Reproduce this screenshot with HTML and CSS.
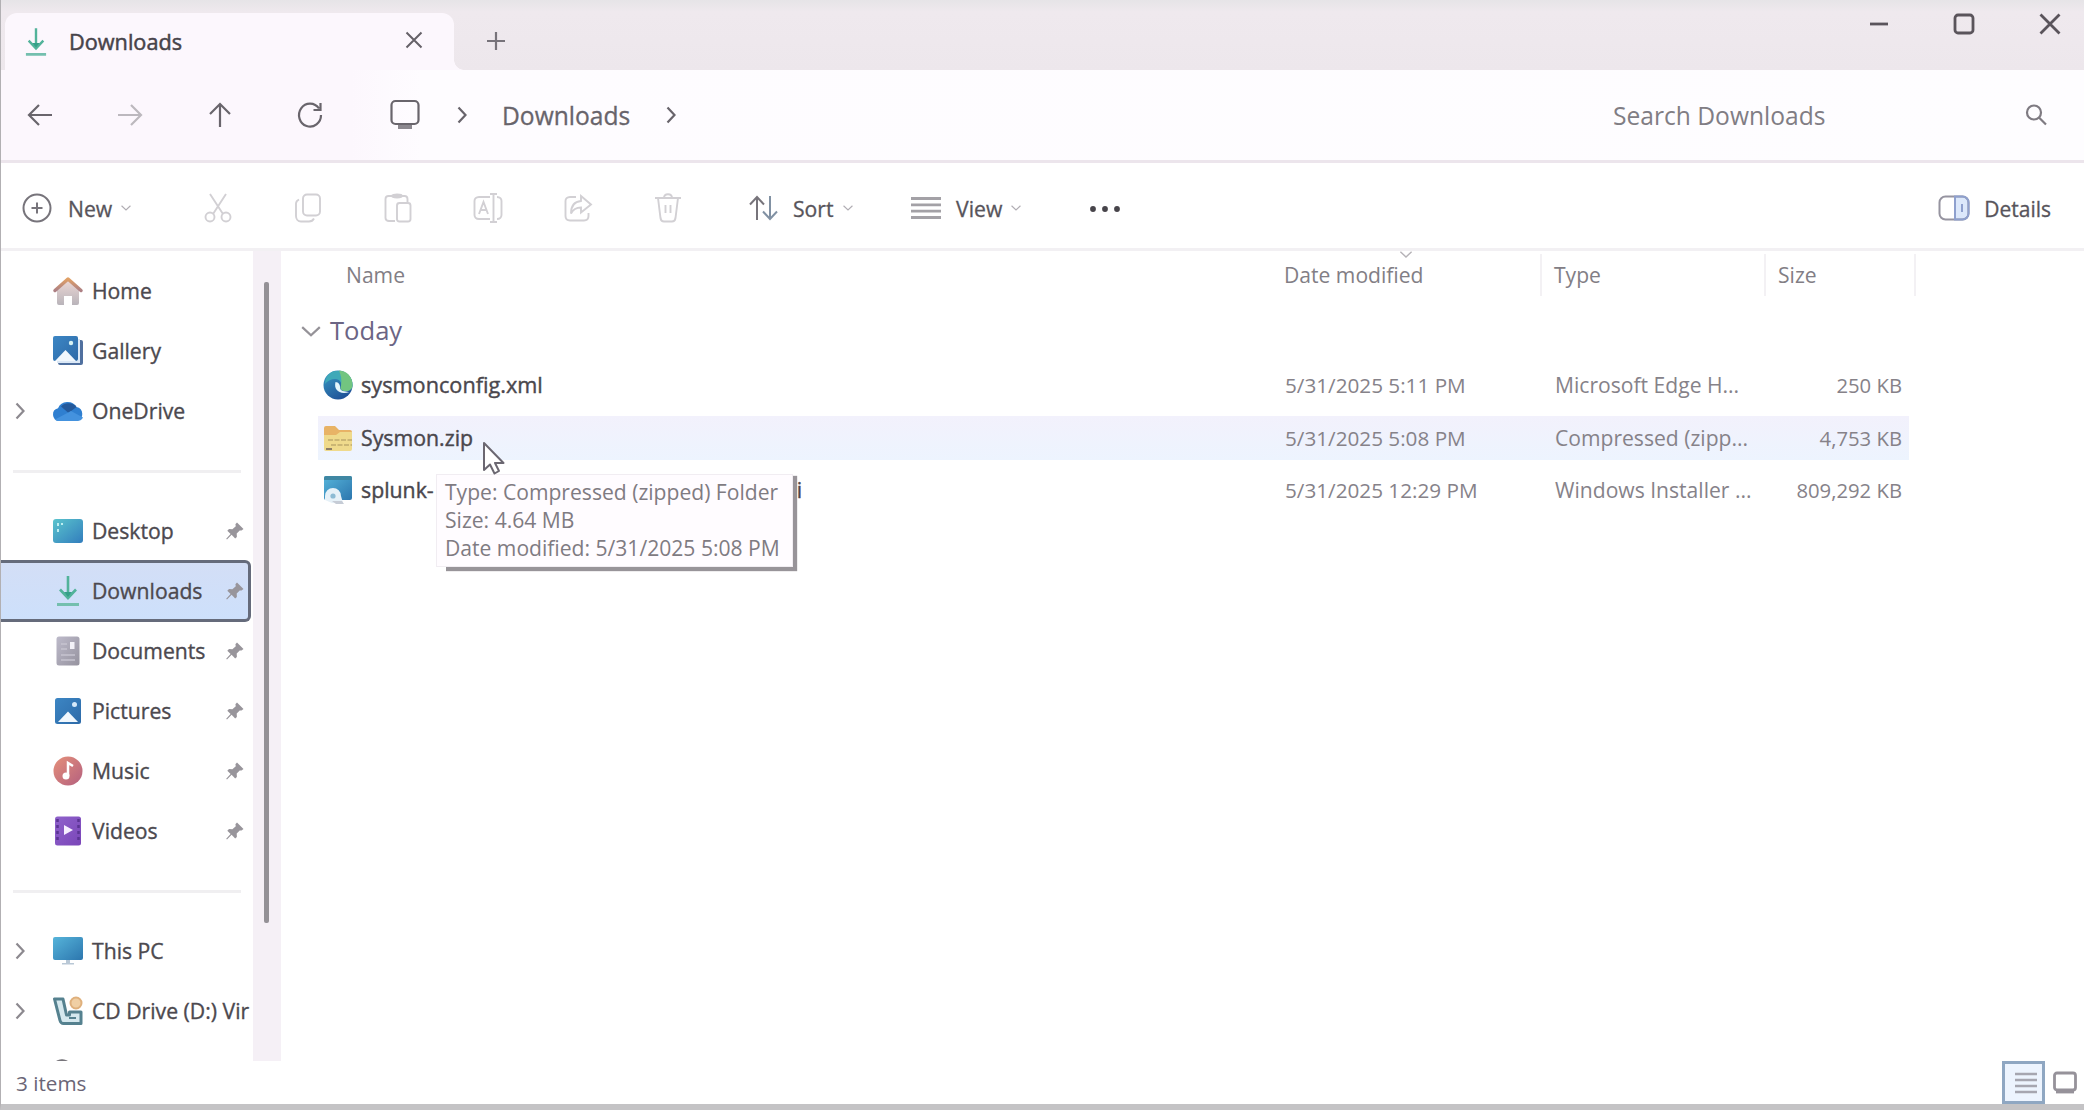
FILE: index.html
```html
<!DOCTYPE html>
<html lang="en">
<head>
<meta charset="utf-8">
<title>Downloads</title>
<link rel="stylesheet" href="styles.css">
</head>
<body>
<svg class="defs" width="0" height="0">
  <defs>
    <linearGradient id="blue" x1="0" y1="0" x2="1" y2="1"><stop offset="0" stop-color="#3c86c4"/><stop offset="1" stop-color="#2d6aa8"/></linearGradient>
    <linearGradient id="screen" x1="0" y1="0" x2="1" y2="1"><stop offset="0" stop-color="#56b4da"/><stop offset="1" stop-color="#2c76ae"/></linearGradient>
    <linearGradient id="desk" x1="0" y1="0" x2="1" y2="1"><stop offset="0" stop-color="#5ac4cd"/><stop offset="1" stop-color="#327dbd"/></linearGradient>
    <linearGradient id="note" x1="0" y1="0" x2="1" y2="1"><stop offset="0" stop-color="#e5907a"/><stop offset="1" stop-color="#b4607f"/></linearGradient>
    <linearGradient id="film" x1="0" y1="0" x2="1" y2="1"><stop offset="0" stop-color="#8f62cb"/><stop offset="1" stop-color="#7a45b8"/></linearGradient>
    <linearGradient id="roof" x1="0" y1="0" x2="0" y2="1"><stop offset="0" stop-color="#e0a066"/><stop offset="1" stop-color="#ad8084"/></linearGradient>
    <linearGradient id="wall" x1="0" y1="0" x2="0" y2="1"><stop offset="0" stop-color="#efd9d6"/><stop offset="1" stop-color="#b9b4ba"/></linearGradient>
    <linearGradient id="paper" x1="0" y1="0" x2="1" y2="1"><stop offset="0" stop-color="#bdbaca"/><stop offset="1" stop-color="#96939f"/></linearGradient>
    <linearGradient id="edge" x1="0" y1="0" x2=".6" y2="1"><stop offset="0" stop-color="#3a9cc4"/><stop offset="1" stop-color="#1f5298"/></linearGradient>
    <symbol id="pin" viewBox="0 0 20 20"><path d="M12 1.5 18.5 8l-2 1.6-1.8-.2-3 3.2.2 3.4-1.7 1.5-3.600-3.700L2 18.600l-.8-.8L5.600 13 2.300 9.700 4 8l3.400.2 3.400-3-.4-1.900z" fill="#98959b"/></symbol>
    <symbol id="right" viewBox="0 0 10 18"><path d="M1.500 1.500 8.500 9l-7 7.500" fill="none" stroke="currentColor" stroke-width="2.200"/></symbol>
    <symbol id="down" viewBox="0 0 18 10"><path d="M1 1l8 7.500L17 1" fill="none" stroke="currentColor" stroke-width="2"/></symbol>
    <symbol id="download" viewBox="0 0 24 32"><path d="M12 1v21M4 14.500l8 8.500 8-8.500" fill="none" stroke="#52b39a" stroke-width="2.600"/><path d="M8 17h8l-4 5z" fill="#35a088"/><path d="M1 29.500h22" stroke="#74bfae" stroke-width="3"/></symbol>
    <symbol id="picture" viewBox="0 0 28 28"><rect x="1" y="1" width="26" height="26" rx="2.500" fill="url(#blue)"/><path d="M4 25 14 14.500 24 25z" fill="#f0f7fd"/><circle cx="20.500" cy="7.500" r="2.500" fill="#d6eafa"/></symbol>
  </defs>
</svg>

<div class="window">
  <header class="titlebar">
    <div class="tab">
      <svg class="tab-icon" width="22" height="32"><use href="#download"/></svg>
      <span class="tab-title">Downloads</span>
      <svg class="tab-close" width="18" height="18" viewBox="0 0 18 18"><path d="M1.500 1.500l15 15m0-15l-15 15"/></svg>
    </div>
    <svg class="tab-add" width="20" height="20" viewBox="0 0 20 20"><path d="M10 1v18M1 10h18"/></svg>
    <div class="captions">
      <svg width="20" height="20" viewBox="0 0 20 20"><path d="M1 10h18"/></svg>
      <svg width="22" height="22" viewBox="0 0 22 22"><rect x="2" y="2" width="18" height="18" rx="3"/></svg>
      <svg width="22" height="22" viewBox="0 0 22 22"><path d="M1.500 1.500l19 19m0-19l-19 19"/></svg>
    </div>
  </header>

  <nav class="navbar">
    <div class="nav-buttons">
      <svg width="26" height="24" viewBox="0 0 26 24"><path d="M25 12H2M12 2 2 12l10 10"/></svg>
      <svg class="off" width="26" height="24" viewBox="0 0 26 24"><path d="M1 12h23M14 2l10 10-10 10"/></svg>
      <svg width="26" height="26" viewBox="0 0 26 26"><path d="M13 25V2M3 12 13 2l10 10"/></svg>
      <svg width="26" height="28" viewBox="0 0 26 28"><path d="M22 7.500A11 11.500 0 1 0 24 14M23.500 2v7h-7"/></svg>
    </div>
    <div class="address">
      <svg width="30" height="32" viewBox="0 0 30 32"><rect x="1.500" y="2" width="27" height="23" rx="4"/><path class="stand" d="M8 26h14v4H8z"/></svg>
      <svg class="crumb-sep" width="10" height="18"><use href="#right"/></svg>
      <span class="crumb">Downloads</span>
      <svg width="10" height="18"><use href="#right"/></svg>
    </div>
    <div class="search">
      <span>Search Downloads</span>
      <svg width="22" height="22" viewBox="0 0 22 22"><circle cx="9" cy="8.500" r="7"/><path d="M14 13.500l7 7"/></svg>
    </div>
  </nav>

  <div class="toolbar">
    <div class="cmd new">
      <svg width="30" height="30" viewBox="0 0 30 30"><circle cx="15" cy="15" r="13.500"/><path d="M15 9.500v11M9.500 15h11"/></svg>
      <span>New</span><svg class="caret" width="10" height="6"><use href="#down"/></svg>
    </div>
    <div class="edit">
      <svg width="28" height="30" viewBox="0 0 28 30"><path d="M6 1l13 20M22 1 9 21"/><circle cx="6" cy="24" r="4.500"/><circle cx="22" cy="24" r="4.500"/></svg>
      <svg width="28" height="30" viewBox="0 0 28 30"><rect x="9" y="1.500" width="17" height="21" rx="4"/><path d="M5 6.500c-2 1-3 2-3 4V23c0 3 2 5.500 5 5.500h8c2 0 4-1 5-3"/></svg>
      <svg width="28" height="30" viewBox="0 0 28 30"><path d="M11 28H5c-2 0-3.500-1-3.500-3V6c0-2 1-3 3-3h16c2 0 3 1 3 3v3M8 3c0-2 10-2 10 0s-10 2-10 0"/><rect x="13" y="10" width="13.500" height="18.500" rx="2.500"/></svg>
      <svg width="30" height="30" viewBox="0 0 30 30"><path d="M17 4H6C3 4 1.500 6 1.500 8v14c0 2 1.500 4 4.500 4h11M24 4c3 0 4.500 2 4.500 4v14c0 2-1.500 4-4.500 4M20.500 1v28M17 1h7M17 29h7M6 21l4.500-12L15 21M7.500 17h6"/></svg>
      <svg width="28" height="28" viewBox="0 0 28 28"><path d="M12 3H6C3 3 1.500 5 1.500 7v15c0 3 2 4.500 4.500 4.500h14c3 0 4.500-2 4.500-4.500v-3M17 2l10 8.500-10 8v-5c-5 0-8 2-10 6 0-8 4-12 10-12.500z"/></svg>
      <svg width="28" height="30" viewBox="0 0 28 30"><path d="M1 5h26M4 5l2.500 20c.3 2 1.500 3.500 3.500 3.500h8c2 0 3.200-1.500 3.500-3.500L24 5M10 5c0-5 8-5 8 0M11.500 12v8M16.500 12v8"/></svg>
    </div>
    <div class="cmd sort">
      <svg width="30" height="26" viewBox="0 0 30 26"><path d="M8 25V2M1 9.500 8 2l7 7.500"/><path class="steel" d="M21 1v23M14 16.500l7 7.500 7-7.500"/></svg>
      <span>Sort</span><svg class="caret" width="10" height="6"><use href="#down"/></svg>
    </div>
    <div class="cmd view">
      <svg width="30" height="22" viewBox="0 0 30 22"><path d="M0 1.500h30M0 7.800h30M0 14.200h30M0 20.500h30"/></svg>
      <span>View</span><svg class="caret" width="10" height="6"><use href="#down"/></svg>
    </div>
    <svg class="more" width="32" height="8" viewBox="0 0 32 8"><circle cx="4" cy="4" r="2.900"/><circle cx="16" cy="4" r="2.900"/><circle cx="28" cy="4" r="2.900"/></svg>
    <div class="cmd details">
      <svg width="32" height="26" viewBox="0 0 32 26"><path class="pane" d="M17 1.500h7.500a6 6 0 0 1 6 6v11a6 6 0 0 1-6 6H17z"/><rect x="1.500" y="1.500" width="29" height="23" rx="6"/><path class="pane-line" d="M17 1.500h7.500a6 6 0 0 1 6 6v11a6 6 0 0 1-6 6H17zM24 9v8"/></svg>
      <span>Details</span>
    </div>
  </div>

  <main class="body">
    <aside class="sidebar">
      <div class="tree">
        <div class="node"><i class="exp"></i><svg class="ico" width="32" height="30" viewBox="0 0 32 30"><path d="M5 12 16 3l11 9v15a2 2 0 0 1-2 2h-5v-9h-8v9H7a2 2 0 0 1-2-2z" fill="url(#wall)"/><path d="M3 14.500 16 3l13 11.500" fill="none" stroke="url(#roof)" stroke-width="3.500" stroke-linecap="round" stroke-linejoin="round"/></svg><span>Home</span></div>
        <div class="node"><i class="exp"></i><svg class="ico" width="32" height="32" viewBox="0 0 32 32"><path d="M27 5h2a2 2 0 0 1 2 2v21a2 2 0 0 1-2 2H8a2 2 0 0 1-2-2v-2h21z" fill="#50709f"/><path d="M26 4h2v24H5v-2h21z" fill="#dbe8f6"/><rect x="1" y="1" width="25" height="25" rx="2" fill="url(#blue)"/><path d="M3 26 13.500 15 24 26z" fill="#f0f7fd"/><circle cx="19" cy="8" r="2.200" fill="#d6f2f4"/></svg><span>Gallery</span></div>
        <div class="node"><svg class="exp" width="10" height="18"><use href="#right"/></svg><svg class="ico" width="32" height="22" viewBox="0 0 32 22"><path d="M7 21a6.500 6.500 0 0 1-1-12.800A10.500 10.500 0 0 1 24.500 7 7.200 7.200 0 0 1 25 21z" fill="#2f7fd0"/><path d="M9 6.500A10.500 10.500 0 0 1 24.500 7l-8 6z" fill="#24599b"/><path d="M3 19.500 19 11l12 6.500c-1 2.500-3.500 3.500-6 3.500H7c-1.500 0-3-.5-4-1.500z" fill="#4492de"/></svg><span>OneDrive</span></div>
        <hr>
        <div class="node"><i class="exp"></i><svg class="ico" width="30" height="24" viewBox="0 0 30 24"><rect width="30" height="24" rx="3" fill="url(#desk)"/><path d="M5 4v3M5 10v3M9 4v2" stroke="#bdeef0" stroke-width="2"/></svg><span>Desktop</span><svg class="pin" width="20" height="20"><use href="#pin"/></svg></div>
        <div class="node selected"><i class="exp"></i><svg class="ico" width="24" height="32"><use href="#download"/></svg><span>Downloads</span><svg class="pin" width="20" height="20"><use href="#pin"/></svg></div>
        <div class="node"><i class="exp"></i><svg class="ico" width="24" height="30" viewBox="0 0 24 30"><rect x=".5" y=".5" width="23" height="29" rx="2.500" fill="url(#paper)"/><path d="M5 8h6M5 13h6M5 19h14M5 24h14" stroke="#c6c3d0" stroke-width="1.500"/><rect x="14" y="6" width="4.500" height="7" fill="#f3f2f8"/></svg><span>Documents</span><svg class="pin" width="20" height="20"><use href="#pin"/></svg></div>
        <div class="node"><i class="exp"></i><svg class="ico" width="28" height="28"><use href="#picture"/></svg><span>Pictures</span><svg class="pin" width="20" height="20"><use href="#pin"/></svg></div>
        <div class="node"><i class="exp"></i><svg class="ico" width="30" height="30" viewBox="0 0 30 30"><circle cx="15" cy="15" r="14.500" fill="url(#note)"/><path d="M15 20V7l5 3" fill="none" stroke="#fff" stroke-width="2.500"/><circle cx="13" cy="20" r="3.500" fill="#fff"/></svg><span>Music</span><svg class="pin" width="20" height="20"><use href="#pin"/></svg></div>
        <div class="node"><i class="exp"></i><svg class="ico" width="28" height="30" viewBox="0 0 28 30"><rect x="1" y=".5" width="26" height="29" rx="2.500" fill="url(#film)"/><path d="M3.500 3v24M24.500 3v24" stroke="#5b3494" stroke-width="2.500" stroke-dasharray="3 3"/><path d="M10 9v10l9-5z" fill="#f6efff"/></svg><span>Videos</span><svg class="pin" width="20" height="20"><use href="#pin"/></svg></div>
        <hr>
        <div class="node"><svg class="exp" width="10" height="18"><use href="#right"/></svg><svg class="ico" width="32" height="30" viewBox="0 0 32 30"><rect x="1" y="1" width="30" height="23" rx="2" fill="url(#screen)"/><path d="M14 24h4v3h-4zM10 27h12v1.500H10z" fill="#b9c8d6"/></svg><span>This PC</span></div>
        <div class="node"><svg class="exp" width="10" height="18"><use href="#right"/></svg><svg class="ico" width="32" height="30" viewBox="0 0 32 30"><circle cx="24" cy="7" r="5.500" fill="#f0cfa4" stroke="#dfb07c" stroke-width="2"/><path d="M2.500 3H11l3.500 16h3V16H29v11.500H11.500c-2 0-3-1-3.500-3z" fill="#d5e8ee" stroke="#55818f" stroke-width="3" stroke-linejoin="round"/><path d="M17 22h7" stroke="#55818f" stroke-width="2"/></svg><span>CD Drive (D:) Vir</span></div>
        <div class="node cut"><i class="exp"></i><svg class="ico" width="14" height="5" viewBox="0 0 14 5"><path d="M1 3.500Q7 0 13 3.500z" fill="#77757b" stroke="#77757b"/></svg></div>
      </div>
      <div class="gutter"><div class="thumb"></div></div>
    </aside>

    <section class="files">
      <div class="columns">
        <span class="name">Name</span><span class="date">Date modified</span><span class="type">Type</span><span class="size">Size</span>
        <svg class="sort-mark" width="14" height="7"><use href="#down"/></svg>
      </div>
      <div class="group"><svg width="20" height="11"><use href="#down"/></svg><span>Today</span></div>
      <div class="file">
        <svg width="30" height="30" viewBox="0 0 30 30"><circle cx="15" cy="15" r="14.500" fill="url(#edge)"/><path d="M8 2.500C17-2 30 4 29.500 15c0 4-3 6-6.500 6-4 0-6.500-2-5-5 1-3-1-7-6-7-4 0-8 2-10 5C2 9 4 5 8 2.500z" fill="#3fa9b8"/><path d="M16 .6c8 .4 13.500 6.400 13.500 14.400 0 4-3 6-6.500 6-4 0-6.500-2-5-5C19 10 18 5 16 .6z" fill="#72c580"/><path d="M12.500 12c-2 8 4 13 14 10-2-.4-9 0-9.500-4 .500-3-1.500-6-4.500-6z" fill="#e4f5fb"/></svg>
        <span class="name wide">sysmonconfig.xml</span><span class="date">5/31/2025 5:11 PM</span><span class="type">Microsoft Edge H...</span><span class="size">250 KB</span>
      </div>
      <div class="file hover">
        <svg width="30" height="28" viewBox="0 0 30 28"><path d="M1 4a2 2 0 0 1 2-2h9l4 4h11a2 2 0 0 1 2 2v4H1z" fill="#e8b366"/><path d="M1 11h12l4-3h12v17a2 2 0 0 1-2 2H3a2 2 0 0 1-2-2z" fill="#efda8c"/><path d="M5 16h24M8 21h21" stroke="#cbb674" stroke-width="1.800" stroke-dasharray="5 1.500"/><path d="M3 25h6" stroke="#8d7f68" stroke-width="2"/></svg>
        <span class="name">Sysmon.zip</span><span class="date">5/31/2025 5:08 PM</span><span class="type">Compressed (zipp...</span><span class="size">4,753 KB</span>
      </div>
      <div class="file">
        <svg width="30" height="30" viewBox="0 0 30 30"><rect x="1" y="1" width="28" height="24" rx="2" fill="url(#screen)"/><path d="M1 3a2 2 0 0 1 2-2h24a2 2 0 0 1 2 2v2H1z" fill="#3f87a3"/><path d="M2 25v-4a8 8 0 0 1 16 0l2 7H9z" fill="#e6f1f8"/><circle cx="10" cy="21" r="2.600" fill="#8dbbd4"/><path d="M9 26h10l2 3H13z" fill="#c6ccd6"/></svg>
        <span class="name">splunk-<span class="tail">i</span></span><span class="date">5/31/2025 12:29 PM</span><span class="type">Windows Installer ...</span><span class="size">809,292 KB</span>
      </div>
      <div class="tooltip">Type: Compressed (zipped) Folder<br>Size: 4.64 MB<br>Date modified: 5/31/2025 5:08 PM</div>
      <svg class="pointer" width="25" height="36" viewBox="0 0 25 36"><path d="M2 2v27l6-5.500 4.500 9 4.500-2.500-4-8h8.500z"/></svg>
    </section>
  </main>

  <footer class="status">
    <span>3 items</span>
    <div class="modes">
      <div class="mode active"><svg width="22" height="22" viewBox="0 0 22 22"><path d="M0 2h22M0 8h22M0 14h22M0 20h22"/></svg></div>
      <svg class="mode-large" width="24" height="24" viewBox="0 0 24 24"><rect x="1.500" y="2" width="21" height="17" rx="2.500"/><path d="M3 21h18"/></svg>
    </div>
  </footer>
</div>
</body>
</html>
```
FILE: styles.css
```css
* { box-sizing: border-box; }

body {
  margin: 0;
  width: 2084px;
  height: 1110px;
  overflow: hidden;
  background: #fff;
  color: #4c494f;
  font: 21.2px/30px "Open Sans", "Noto Sans", sans-serif;
  white-space: nowrap;
}

svg { display: block; flex: none; overflow: visible; fill: none; stroke: none; }
.defs { position: absolute; }

.window {
  display: flex;
  flex-direction: column;
  height: 1110px;
  border-left: 1px solid #b2b0b3;
  border-bottom: 6px solid #c4c3c5;
}

/* Title bar */
.titlebar {
  display: flex;
  align-items: flex-start;
  height: 70px;
  padding-left: 4px;
  background: linear-gradient(#e6e4e7, #efe9ee 12px, #ede7ec);
}
.tab {
  position: relative;
  display: flex;
  align-items: center;
  width: 449px;
  height: 57px;
  margin-top: 13px;
  padding: 0 31px 0 20px;
  border-radius: 12px 12px 0 0;
  background: #fcf7fd;
}
.tab::after {
  content: "";
  position: absolute;
  left: 100%;
  bottom: 0;
  width: 10px;
  height: 10px;
  background: radial-gradient(circle at 100% 0, transparent 9.500px, #fcf7fd 10px);
}
.tab-title { margin-left: 22px; flex: 1; font-size: 21.700px; color: #47434a; -webkit-text-stroke: .5px; }
.tab-close { margin-top: -4px; stroke: #656168; stroke-width: 2; }
.tab-add { margin: 31px 0 0 32px; stroke: #77737a; stroke-width: 2.200; }
.captions {
  display: flex;
  align-items: center;
  gap: 64px;
  margin: 13px 23px 0 auto;
  stroke: #5a545b;
  stroke-width: 2.800;
}
.captions svg { stroke: inherit; }

/* Navigation row */
.navbar {
  display: flex;
  align-items: center;
  height: 93px;
  border-bottom: 3px solid #ece5ec;
  background: linear-gradient(90deg, #fcf7fd 350px, #fefcff 420px, #fefdff);
  font-size: 24.600px;
  color: #68646b;
}
.nav-buttons { display: flex; align-items: center; gap: 64px; width: 364px; padding-left: 26px; }
.navbar svg { stroke: #69656c; stroke-width: 2.200; }
.navbar .off { stroke: #bcb8be; }
.navbar .stand { fill: #8b878e; stroke: none; }
.address { display: flex; align-items: center; flex: 1; padding-left: 25px; }
.address .crumb-sep { margin-left: 37px; }
.crumb { width: 164px; margin-left: 35px; -webkit-text-stroke: .3px; }
.navbar span { position: relative; top: 1px; }
.search { display: flex; align-items: center; width: 472px; color: #817d84; font-size: 24.600px; }
.search svg { margin-left: auto; margin-right: 37px; stroke: #7f7b82; }
.search span { margin-left: 1px; }

/* Command bar */
.toolbar {
  display: flex;
  align-items: center;
  height: 88px;
  padding-top: 4px;
  border-bottom: 3px solid #f2f0f3;
  color: #57545b;
}
.cmd { display: flex; align-items: center; }
.cmd span { margin-top: 2px; -webkit-text-stroke: .3px; }
.cmd svg { stroke: #77747b; stroke-width: 2; }
.cmd .caret { color: #b0adb3; margin-left: 9px; stroke: none; }
.new { width: 172px; padding-left: 21px; }
.new span { margin-left: 16px; }
.edit { display: flex; align-items: center; width: 540px; }
.edit svg { width: 90px; stroke: #d2d0d4; stroke-width: 1.900; }
.sort { width: 162px; padding-left: 36px; }
.sort span { margin-left: 14px; }
.sort .steel { stroke: #8191a3; }
.view { width: 214px; padding-left: 36px; }
.view span { margin-left: 15px; }
.view svg:first-child { stroke: #a3a1a6; stroke-width: 2.800; }
.more { fill: #47444a; margin-top: 3px; }
.details { margin: 0 33px 0 auto; font-size: 21px; }
.details span { margin-left: 14px; }
.details svg { stroke: #9694a0; }
.details .pane { fill: #dce8fb; stroke: none; }
.details .pane-line { stroke: #8ea0ce; }

/* Body */
.body { display: flex; flex: 1; min-height: 0; }
.sidebar { display: flex; width: 280px; }
.tree { width: 252px; padding-top: 10px; overflow: hidden; }
.node { display: flex; align-items: center; width: 249px; height: 60px; overflow: hidden; }
.node .exp { flex: none; width: 10px; margin-left: 14px; color: #8c898f; }
.node .ico { width: 32px; margin-left: 27px; }
.node span { margin-left: 8px; -webkit-text-stroke: .35px; }
.node .pin { margin: 0 5px 0 auto; }
.tree hr { height: 3px; margin: 29px 12px 28px 12px; border: 0; background: #f0eff1; }
.selected {
  width: 251px;
  height: 62px;
  margin: -1px 0 -1px -1px;
  padding-left: 1px;
  border: 3px solid #656b7b;
  border-left: 0;
  border-radius: 0 6px 6px 0;
  background: linear-gradient(#d3def6, #cde0fb);
}
.selected .pin { margin-right: 3px; }
.cut { height: 38px; }
.cut .ico { width: 14px; margin-left: 30px; }
.gutter { width: 28px; background: #f5f0f6; }
.thumb { width: 5px; height: 641px; margin: 31px 0 0 11px; border-radius: 2px; background: #949196; }

/* File list */
.files { position: relative; flex: 1; }
.columns {
  display: flex;
  align-items: center;
  height: 48px;
  color: #827e85;
  font-size: 21.100px;
}
.columns .name { width: 937px; margin-left: 65px; }
.columns .date { width: 257px; }
.columns .type { width: 224px; padding-left: 12px; border-left: 2px solid #f3f1f4; }
.columns .size { width: 152px; padding-left: 12px; border-left: 2px solid #f3f1f4; border-right: 2px solid #f3f1f4; }
.columns .type, .columns .size { line-height: 42px; }
.columns .date { padding-left: 1px; }
.sort-mark { position: absolute; left: 1118px; top: 0; color: #b5b2b7; }
.group { display: flex; align-items: center; height: 64px; padding-left: 20px; font-size: 25.600px; color: #6b6584; }
.group svg { color: #959298; }
.group span { margin-left: 9px; }
.file {
  display: flex;
  align-items: center;
  width: 1591px;
  height: 44px;
  margin: 0 0 8.500px 37px;
  padding: 0 7px 0 5px;
  color: #868289;
  font-size: 20.700px;
}
.file.hover { background: linear-gradient(#f2f1fc, #edf4fe); }
.file .name { width: 924px; margin-left: 8px; color: #4a474d; font-size: 21.300px; -webkit-text-stroke: .4px; }
.file .wide { font-size: 21.700px; }
.file .date { width: 270px; }
.file .type { width: 200px; font-size: 21.100px; }
.file .size { flex: 1; text-align: right; font-size: 20.300px; }
.file .tail { margin-left: 363px; }

.tooltip {
  position: absolute;
  left: 155px;
  top: 223px;
  width: 357px;
  height: 93px;
  padding: 3px 0 0 8px;
  background: #fffcff;
  border: 1px solid #f1edf2;
  box-shadow: 3px 3px 1px 1px #989499;
  clip-path: polygon(0 0, 500px 0, 500px 120px, 10px 120px, 10px 93px, 0 93px);
  color: #7f7b82;
  font-size: 21.100px;
  line-height: 27.900px;
}
.pointer { position: absolute; left: 201px; top: 190px; }
.pointer path { fill: #fff; stroke: #6b6771; stroke-width: 2; stroke-linejoin: round; }

/* Status bar */
.status { display: flex; align-items: center; height: 43px; padding-left: 15px; font-size: 20.700px; color: #6a6576; }
.modes { display: flex; align-items: center; gap: 8px; margin: 0 7px 0 auto; }
.mode { display: grid; place-items: center; width: 43px; height: 43px; border: 3px solid #8fa7c2; background: #edf4fe; }
.mode svg { stroke: #a6a6b0; stroke-width: 2.500; margin-left: 4px; }
.mode-large { stroke: #96929a; stroke-width: 2.800; }
```
